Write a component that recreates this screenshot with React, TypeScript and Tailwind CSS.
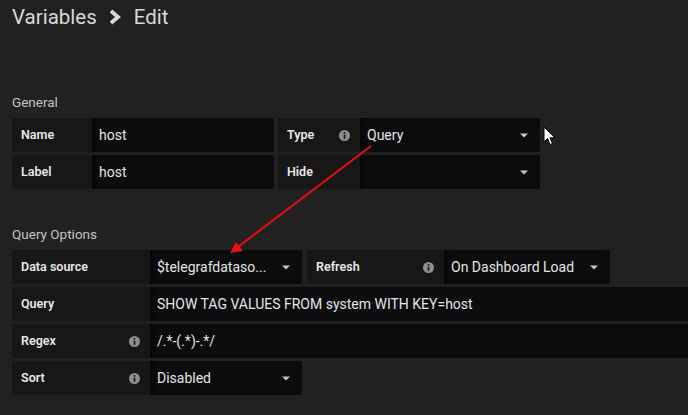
const font = "font-['Roboto','Liberation_Sans',sans-serif]";

function InfoIcon() {
  return (
    <svg width="11" height="11" viewBox="0 0 12 12" className="shrink-0">
      <circle cx="6" cy="6" r="6" fill="#8e8e8e" />
      <rect x="5.1" y="5" width="1.8" height="4.6" fill="#171717" />
      <rect x="5.1" y="2.2" width="1.8" height="1.8" fill="#171717" />
    </svg>
  );
}

function Caret() {
  return (
    <svg width="8" height="5" viewBox="0 0 8 5" className="shrink-0">
      <path d="M0 0.5 H8 L4 4.5 Z" fill="#c8c8c8" />
    </svg>
  );
}

function Label({ text, width, info }: { text: string; width: string; info?: boolean }) {
  return (
    <div
      className={`${width} shrink-0 h-full flex items-center justify-between pl-[9px] pr-[10px] bg-[#171717] rounded-l-[3px] text-[12.5px] font-semibold text-[#e8e8e8]`}
    >
      <span>{text}</span>
      {info && <InfoIcon />}
    </div>
  );
}

function Value({
  text,
  width,
  select,
  rounded = true,
}: {
  text?: string;
  width: string;
  select?: boolean;
  rounded?: boolean;
}) {
  return (
    <div
      className={`${width} shrink-0 h-full flex items-center justify-between pl-[7px] pr-[12px] bg-[#0c0c0e] ${
        rounded ? "rounded-r-[3px]" : ""
      } text-[14px] text-[#e4e4e4] shadow-[inset_6px_0_6px_-4px_rgba(0,0,0,0.6)]`}
    >
      <span className="whitespace-nowrap">{text}</span>
      {select && <Caret />}
    </div>
  );
}

export default function App() {
  return (
    <div className={`relative w-[688px] h-[415px] overflow-hidden bg-[#212121] ${font}`}>
      <h1 className="flex items-center h-[34px] pl-3 text-[20.5px] text-[#d8d9da]">
        <span>Variables</span>
        <svg width="14" height="16" viewBox="0 0 14 16" className="ml-[11px] mr-[12px]">
          <path d="M3 2 L10 8 L3 14" stroke="#d8d9da" strokeWidth="3.8" fill="none" strokeLinejoin="miter" />
        </svg>
        <span>Edit</span>
      </h1>

      <div className="mt-[60px] pl-3">
        <div className="h-4 text-[13.5px] leading-4 text-[#c4c4c4]">General</div>
        <div className="mt-2 flex flex-col gap-[3px]">
          <div className="flex h-[34px] gap-[4px]">
            <div className="flex h-full">
              <Label text="Name" width="w-[80px]" />
              <Value text="host" width="w-[182px]" />
            </div>
            <div className="flex h-full">
              <Label text="Type" width="w-[82px]" info />
              <Value text="Query" width="w-[180px]" select />
            </div>
          </div>
          <div className="flex h-[34px] gap-[4px]">
            <div className="flex h-full">
              <Label text="Label" width="w-[80px]" />
              <Value text="host" width="w-[182px]" />
            </div>
            <div className="flex h-full">
              <Label text="Hide" width="w-[82px]" />
              <Value width="w-[180px]" select />
            </div>
          </div>
        </div>

        <div className="mt-[37px] h-4 text-[13.5px] leading-4 text-[#c4c4c4]">Query Options</div>
        <div className="mt-2 flex flex-col gap-[3px]">
          <div className="flex h-[34px] gap-[5px]">
            <div className="flex h-full">
              <Label text="Data source" width="w-[138px]" />
              <Value text="$telegrafdataso..." width="w-[152px]" select />
            </div>
            <div className="flex h-full">
              <Label text="Refresh" width="w-[137px]" info />
              <Value text="On Dashboard Load" width="w-[166px]" select />
            </div>
          </div>
          <div className="flex h-[34px]">
            <Label text="Query" width="w-[138px]" />
            <Value text="SHOW TAG VALUES FROM system WITH KEY=host" width="w-[560px]" rounded={false} />
          </div>
          <div className="flex h-[34px]">
            <Label text="Regex" width="w-[138px]" info />
            <Value text="/.*-(.*)-.*/" width="w-[560px]" rounded={false} />
          </div>
          <div className="flex h-[34px]">
            <Label text="Sort" width="w-[138px]" info />
            <Value text="Disabled" width="w-[152px]" select />
          </div>
        </div>
      </div>

      {/* annotation arrow */}
      <svg className="absolute left-0 top-0 pointer-events-none" width="688" height="415">
        <line x1="371" y1="146" x2="238" y2="247" stroke="#e81010" strokeWidth="2" />
        <path d="M230 253 L236 242 L243 251 Z" fill="#e81010" />
      </svg>

      {/* mouse cursor */}
      <svg className="absolute left-[543px] top-[126px]" width="14" height="21" viewBox="0 0 14 21">
        <path
          d="M1 1 L1 16 L4.5 12.5 L7 18.5 L9.5 17.5 L7 11.8 L12 11.8 Z"
          fill="#ffffff"
          stroke="#000000"
          strokeWidth="1"
          strokeLinejoin="round"
        />
      </svg>
    </div>
  );
}
